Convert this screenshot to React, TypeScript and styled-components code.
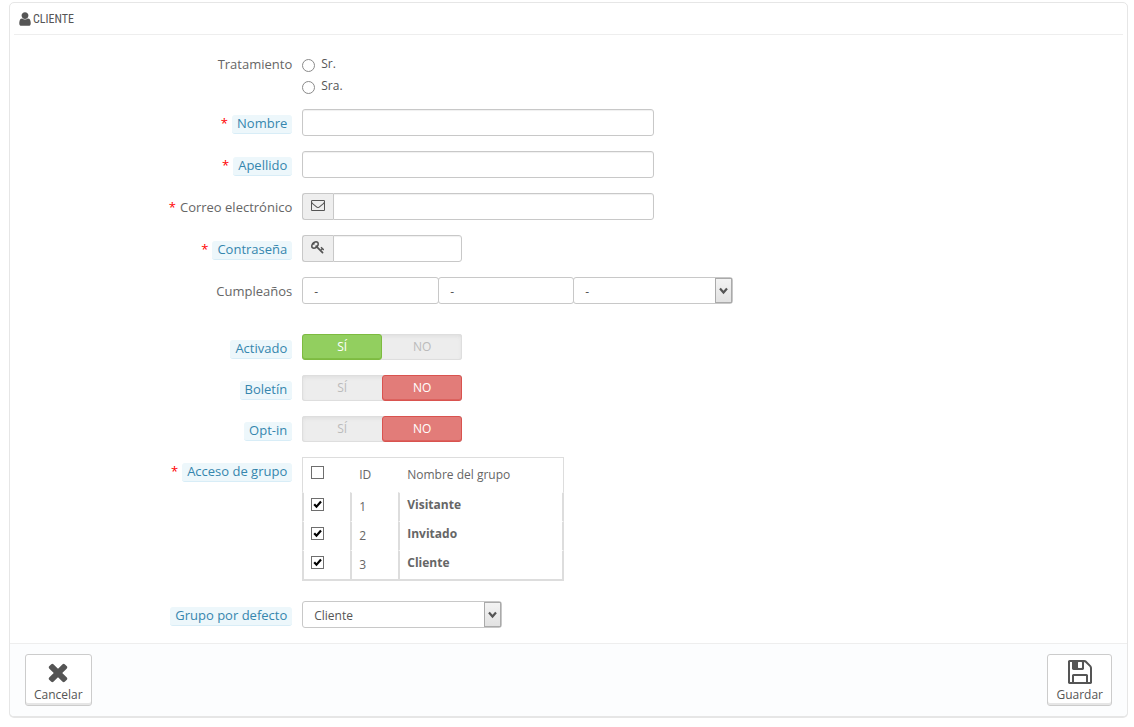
import React from "react";
import styled, { createGlobalStyle, css } from "styled-components";

const GlobalStyle = createGlobalStyle`
  *, *::before, *::after { box-sizing: border-box; }
  body {
    margin: 0;
    background: #fff;
    color: #555;
    font: 12px/18px "Open Sans", "Noto Sans", sans-serif;
  }
  button, input, select { font: inherit; color: inherit; }
`;

const Panel = styled.form`
  margin: 2px 6px 10px 9px;
  border: 1px solid #e6e6e6;
  border-radius: 5px;
  box-shadow: 0 1px 0 #e6e6e6;
  background: #fff;
  overflow: hidden;
`;

const Heading = styled.h3`
  display: flex;
  align-items: center;
  height: 32px;
  margin: 0 4px;
  padding-left: 3px;
  border-bottom: 1px solid #eee;
  font: 400 12px/32px "Ubuntu Condensed", "Roboto Condensed", "Roboto", sans-serif;
  text-transform: uppercase;
`;

const Glyph = styled.svg<{ $size: number }>`
  display: block;
  flex: none;
  width: ${(p) => p.$size}px;
  height: ${(p) => p.$size}px;
  fill: #555;
`;

const Body = styled.div`
  padding: 15px 0 15px 4px;
`;

const Row = styled.div<{ $after?: number }>`
  display: grid;
  grid-template-columns: 25% 1fr;
  column-gap: 10px;
  align-items: start;
  margin-bottom: ${(p) => p.$after ?? 15}px;

  &:last-child { margin-bottom: 0; }
`;

const LabelCell = styled.div`
  display: flex;
  justify-content: flex-end;
  gap: 4px;
  padding-top: 6px;
  color: #666;
  font-size: 13px;
  line-height: 16px;
`;

const Star = styled.span`
  color: #f00;
`;

const FieldLabel = styled.label<{ $hint?: boolean }>`
  ${(p) =>
    p.$hint &&
    css`
      padding: 0 5px 2px;
      border-bottom: 1px solid #d8edf7;
      border-radius: 3px;
      background: #edf7fb;
      color: #3586ae;
    `}
`;

const RadioList = styled.div`
  padding-top: 3px;
`;

const RadioItem = styled.label`
  display: flex;
  align-items: center;
  gap: 6px;
  height: 22px;
  line-height: 20px;
`;

const Radio = styled.input`
  appearance: none;
  width: 13px;
  height: 13px;
  margin: 2px 0 0;
  border: 1px solid #8a8a8a;
  border-radius: 50%;
  background: #fff;

  &:checked { background: radial-gradient(#333 40%, #fff 45%); }
`;

const field = css`
  height: 27px;
  border: 1px solid #c8c8c8;
  border-radius: 3px;
  background: #fff;
`;

const TextInput = styled.input`
  ${field}
  display: block;
  width: 100%;
  max-width: 352px;
  padding: 4px 8px;
  box-shadow: inset 0 1px 1px #f0f0f0;
`;

const InputGroup = styled.div<{ $max: number }>`
  display: flex;
  max-width: ${(p) => p.$max}px;

  ${TextInput} {
    flex: 1;
    min-width: 0;
    border-radius: 0 3px 3px 0;
  }
`;

const Addon = styled.span`
  display: flex;
  justify-content: center;
  align-items: center;
  width: 31px;
  height: 27px;
  padding-bottom: 3px;
  border: 1px solid #c8c8c8;
  border-right: 0;
  border-radius: 3px 0 0 3px;
  background: #eee;
`;

const SelectGroup = styled.div`
  display: flex;
`;

const SelectBox = styled.div<{ $width: number }>`
  position: relative;
  width: ${(p) => p.$width}px;

  & + & { margin-left: -1px; }
`;

const Select = styled.select`
  ${field}
  appearance: none;
  display: block;
  width: 100%;
  padding: 2px 11px 0;
  line-height: 22px;
`;

const Arrow = styled.span`
  position: absolute;
  top: 1px;
  right: 1px;
  display: flex;
  justify-content: center;
  align-items: center;
  width: 17px;
  height: 25px;
  border: 1px solid #aaa;
  background: linear-gradient(#f3f3f3, #e2e2e2);
  pointer-events: none;
`;

const SwitchBox = styled.div`
  display: flex;
  width: 160px;
  height: 26px;
  border-radius: 3px;
  background: #ededed;
  box-shadow: inset 0 0 0 1px #dedede, inset 0 2px 4px #dcdcdc;
`;

const SwitchOption = styled.label<{ $tone: "green" | "red" }>`
  position: relative;
  flex: 1;
  border: 1px solid transparent;
  border-radius: 3px;
  color: #bbb;
  line-height: 23px;
  text-align: center;
  text-transform: uppercase;

  input {
    position: absolute;
    inset: 0;
    margin: 0;
    opacity: 0;
  }

  &:has(input:checked) {
    color: #fff;
    border-color: ${(p) => (p.$tone === "green" ? "#7dbb40" : "#d9534f")};
    background: ${(p) => (p.$tone === "green" ? "#92cf5f" : "#e27c79")};
    box-shadow: inset 0 -1px 0 ${(p) => (p.$tone === "green" ? "#80be45" : "#dc625e")};
  }
`;

const GroupTable = styled.table`
  width: 262px;
  border-collapse: separate;
  border-spacing: 0;
  table-layout: fixed;
  border-bottom: 2px solid #ddd;
  color: #666;

  th, td {
    padding: 0 7px;
    text-align: left;
    vertical-align: top;
  }
  th {
    height: 35px;
    padding-top: 8px;
    border-top: 1px solid #ddd;
    font-weight: 400;
  }
  th:not(:first-child) { padding-left: 9px; }
  th:first-child {
    padding-left: 8px;
    border-left: 1px solid #ddd;
  }
  th:last-child { border-right: 1px solid #ddd; }
  td {
    height: 29px;
    padding-top: 5px;
    border-left: 2px solid #ddd;
    border-top: 1px solid #fff;
  }
  td:last-child {
    padding-top: 3px;
    border-right: 2px solid #ddd;
    font-weight: 700;
  }
`;

const NarrowCol = styled.col`
  width: 48px;
`;

const Tick = styled.input`
  appearance: none;
  display: block;
  width: 13px;
  height: 13px;
  margin: 0;
  border: 1px solid #6e6e6e;
  background: #fff;

  &:checked {
    background: #fff
      url("data:image/svg+xml,%3Csvg xmlns='http://www.w3.org/2000/svg' viewBox='0 0 11 11'%3E%3Cpath d='M2.2 5.2 4.5 7.7 9 2.5' fill='none' stroke='%23000' stroke-width='2.2'/%3E%3C/svg%3E");
  }
`;

const Footer = styled.footer`
  display: flex;
  justify-content: space-between;
  align-items: flex-start;
  padding: 10px 15px;
  border-top: 1px solid #eee;
  background: #fcfdfe;
`;

const ActionButton = styled.button`
  display: flex;
  flex-direction: column;
  align-items: center;
  height: 52px;
  padding: 3px 8px 0;
  border: 1px solid #ccc;
  border-radius: 3px;
  background: #fff;
  box-shadow: inset 0 -2px 0 #e6e6e6;
  line-height: 18px;
`;

const paths = {
  user: "M1536 1399q0 109-62.5 187t-150.5 78h-854q-88 0-150.5-78t-62.5-187q0-85 8.5-160.5t31.5-152 58.5-131 94-89 134.5-34.5q131 128 313 128t313-128q76 0 134.5 34.5t94 89 58.5 131 31.5 152 8.5 160.5zm-256-887q0 159-112.5 271.5t-271.5 112.5-271.5-112.5-112.5-271.5 112.5-271.5 271.5-112.5 271.5 112.5 112.5 271.5z",
  envelope:
    "M1664 1504v-768q-32 36-69 66-268 206-426 338-51 43-83 67t-86.5 48.5-102.5 24.5h-2q-48 0-102.5-24.5t-86.5-48.5-83-67q-158-132-426-338-37-30-69-66v768q0 13 9.5 22.5t22.5 9.5h1472q13 0 22.5-9.5t9.5-22.5zm0-1051v-24.5l-.5-13-3-12.5-5.5-9-9-7.5-14-2.5h-1472q-13 0-22.5 9.5t-9.5 22.5q0 168 147 284 193 152 401 317 6 5 35 29.5t46 37.5 44.5 31.5 50.5 27.5 43 9h2q20 0 43-9t50.5-27.5 44.5-31.5 46-37.5 35-29.5q208-165 401-317 54-43 100.5-115.5t46.5-131.5zm128-37v1088q0 66-47 113t-113 47h-1472q-66 0-113-47t-47-113v-1088q0-66 47-113t113-47h1472q66 0 113 47t47 113z",
  key: "M832 512q0-80-56-136t-136-56-136 56-56 136q0 42 19 83-41-19-83-19-80 0-136 56t-56 136 56 136 136 56 136-56 56-136q0-42-19-83 41 19 83 19 80 0 136-56t56-136zm851 704q0 17-49 66t-66 49q-9 0-28.5-16t-36.5-33-38.5-40-24.5-26l-96 96 220 220q28 28 28 68 0 42-39 81t-81 39q-40 0-68-28l-671-671q-176 131-365 131-163 0-265.5-102.5t-102.5-265.5q0-160 95-313t248-248 313-95q163 0 265.5 102.5t102.5 265.5q0 189-131 365l355 355 96-96q-3-3-26-24.5t-40-38.5-33-36.5-16-28.5q0-17 49-66t66-49q13 0 23 10 6 6 46 44.5t82 79.5 86.5 86 73 78 28.5 41z",
  times:
    "M1490 1322q0 40-28 68l-136 136q-28 28-68 28t-68-28l-294-294-294 294q-28 28-68 28t-68-28l-136-136q-28-28-28-68t28-68l294-294-294-294q-28-28-28-68t28-68l136-136q28-28 68-28t68 28l294 294 294-294q28-28 68-28t68 28l136 136q28 28 28 68t-28 68l-294 294 294 294q28 28 28 68z",
  floppy:
    "M512 1536h768v-384h-768v384zm896 0h128v-896q0-14-10-38.5t-20-34.5l-281-281q-10-10-34-20t-39-10v416q0 40-28 68t-68 28h-576q-40 0-68-28t-28-68v-416h-128v1280h128v-416q0-40 28-68t68-28h832q40 0 68 28t28 68v416zm-384-928v-320q0-13-9.5-22.5t-22.5-9.5h-192q-13 0-22.5 9.5t-9.5 22.5v320q0 13 9.5 22.5t22.5 9.5h192q13 0 22.5-9.5t9.5-22.5zm640 32v928q0 40-28 68t-68 28h-1344q-40 0-68-28t-28-68v-1344q0-40 28-68t68-28h928q40 0 88 20t76 48l280 280q28 28 48 76t20 88z",
};

function Icon({ name, size }: { name: keyof typeof paths; size: number }) {
  return (
    <Glyph $size={size} viewBox="0 0 1792 1792" aria-hidden="true">
      <path d={paths[name]} />
    </Glyph>
  );
}

function SelectArrow() {
  return (
    <Arrow>
      <svg width="9" height="8" viewBox="0 0 9 8" aria-hidden="true">
        <path d="M1 1.5 4.5 5.5 8 1.5" fill="none" stroke="#555" strokeWidth="2.2" />
      </svg>
    </Arrow>
  );
}

interface FieldProps {
  label: string;
  id?: string;
  labelId?: string;
  required?: boolean;
  hint?: boolean;
  after?: number;
  children: React.ReactNode;
}

function Field({ label, id, labelId, required, hint, after, children }: FieldProps) {
  return (
    <Row $after={after}>
      <LabelCell>
        {required && <Star>*</Star>}
        <FieldLabel id={labelId} htmlFor={id} $hint={hint} as={id ? "label" : "span"}>
          {label}
        </FieldLabel>
      </LabelCell>
      {children}
    </Row>
  );
}

function Switch({ name, on }: { name: string; on?: boolean }) {
  return (
    <SwitchBox role="radiogroup" aria-labelledby={`${name}-label`}>
      <SwitchOption $tone="green">
        <input type="radio" name={name} defaultChecked={on} />
        Sí
      </SwitchOption>
      <SwitchOption $tone="red">
        <input type="radio" name={name} defaultChecked={!on} />
        No
      </SwitchOption>
    </SwitchBox>
  );
}

const groups = ["Visitante", "Invitado", "Cliente"];

export default function App() {
  return (
    <>
      <GlobalStyle />
      <Panel onSubmit={(e) => e.preventDefault()}>
        <Heading>
          <Icon name="user" size={16} />
          Cliente
        </Heading>
        <Body>
          <Field label="Tratamiento" labelId="title-label" after={12}>
            <RadioList role="radiogroup" aria-labelledby="title-label">
              {["Sr.", "Sra."].map((t) => (
                <RadioItem key={t}>
                  <Radio type="radio" name="title" />
                  <span>{t}</span>
                </RadioItem>
              ))}
            </RadioList>
          </Field>
          <Field label="Nombre" id="firstname" required hint>
            <TextInput id="firstname" type="text" />
          </Field>
          <Field label="Apellido" id="lastname" required hint>
            <TextInput id="lastname" type="text" />
          </Field>
          <Field label="Correo electrónico" id="email" required>
            <InputGroup $max={352}>
              <Addon>
                <Icon name="envelope" size={14} />
              </Addon>
              <TextInput id="email" type="email" />
            </InputGroup>
          </Field>
          <Field label="Contraseña" id="password" required hint>
            <InputGroup $max={160}>
              <Addon>
                <Icon name="key" size={14} />
              </Addon>
              <TextInput id="password" type="password" />
            </InputGroup>
          </Field>
          <Field label="Cumpleaños" id="birth-day" after={30}>
            <SelectGroup>
              <SelectBox $width={137}>
                <Select id="birth-day">
                  <option>-</option>
                </Select>
              </SelectBox>
              <SelectBox $width={136}>
                <Select aria-label="Mes">
                  <option>-</option>
                </Select>
              </SelectBox>
              <SelectBox $width={160}>
                <Select aria-label="Año">
                  <option>-</option>
                </Select>
                <SelectArrow />
              </SelectBox>
            </SelectGroup>
          </Field>
          <Field label="Activado" labelId="active-label" hint>
            <Switch name="active" on />
          </Field>
          <Field label="Boletín" labelId="newsletter-label" hint>
            <Switch name="newsletter" />
          </Field>
          <Field label="Opt-in" labelId="optin-label" hint>
            <Switch name="optin" />
          </Field>
          <Field label="Acceso de grupo" labelId="groups-label" required hint after={20}>
            <GroupTable aria-labelledby="groups-label">
              <colgroup>
                <NarrowCol />
                <NarrowCol />
                <col />
              </colgroup>
              <thead>
                <tr>
                  <th>
                    <Tick type="checkbox" aria-label="Todos" />
                  </th>
                  <th>ID</th>
                  <th>Nombre del grupo</th>
                </tr>
              </thead>
              <tbody>
                {groups.map((g, i) => (
                  <tr key={g}>
                    <td>
                      <Tick type="checkbox" id={`group-${i}`} defaultChecked />
                    </td>
                    <td>{i + 1}</td>
                    <td>
                      <label htmlFor={`group-${i}`}>{g}</label>
                    </td>
                  </tr>
                ))}
              </tbody>
            </GroupTable>
          </Field>
          <Field label="Grupo por defecto" id="default-group" hint>
            <SelectBox $width={200}>
              <Select id="default-group" defaultValue="Cliente">
                {groups.map((g) => (
                  <option key={g}>{g}</option>
                ))}
              </Select>
              <SelectArrow />
            </SelectBox>
          </Field>
        </Body>
        <Footer>
          <ActionButton type="button">
            <Icon name="times" size={28} />
            Cancelar
          </ActionButton>
          <ActionButton type="submit">
            <Icon name="floppy" size={28} />
            Guardar
          </ActionButton>
        </Footer>
      </Panel>
    </>
  );
}
